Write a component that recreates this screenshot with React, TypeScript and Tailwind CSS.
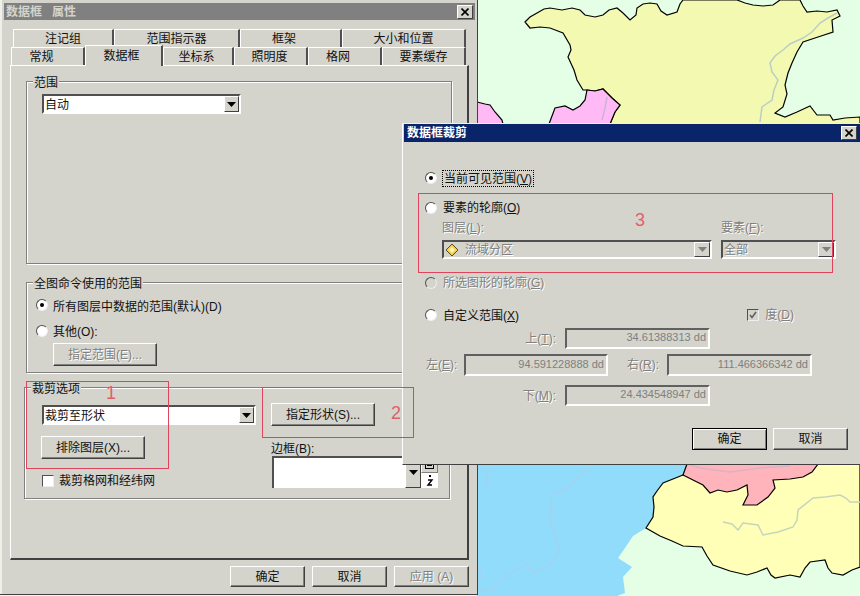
const ui = "#d4d4cc";

function MapBackdrop() {
  return (
    <svg className="absolute inset-0" width="860" height="596" viewBox="0 0 860 596">
      <rect width="860" height="596" fill="#e5ffe6" />
      <path
        d="M525 22 L530 17 L537 13 L544 9 L550 8 L562 10 L572 8 L580 10 L585 15 L595 17 L603 15 L609 10 L617 8 L623 13 L630 20 L636 15 L637 8 L643 4 L650 3 L657 4 L661 11 L667 15 L677 12 L680 4 L683 0 L737 0 L745 3 L753 5 L763 6 L773 5 L780 0 L800 0 L803 6 L807 12 L817 11 L827 12 L837 10 L840 16 L832 20 L833 32 L818 37 L803 42 L797 52 L792 63 L788 73 L785 85 L787 94 L783 107 L775 113 L785 117 L797 112 L810 106 L817 115 L830 115 L833 120 L845 118 L860 117 L860 124 L610 124 L615 112 L620 105 L612 98 L603 89 L595 91 L587 90 L583 90 L577 80 L574 70 L568 57 L571 50 L570 45 L563 33 L550 28 L540 27 L530 28 Z"
        fill="#f4f9b2"
        stroke="#000"
        strokeWidth="1.2"
      />
      <path
        d="M587 90 L595 91 L603 89 L612 98 L620 105 L615 112 L610 124 L549 124 L552 116 L555 108 L565 106 L573 110 L580 106 L585 100 Z"
        fill="#ffb9f5"
        stroke="#000"
        strokeWidth="1.2"
      />
      <path d="M477 102 L485 104 L490 105 L495 112 L502 120 L503 124 L477 124 Z" fill="#ffb9f5" stroke="#000" strokeWidth="1.2" />
      <polyline
        points="837,13 828,18 820,23 812,32 803,38 790,44 783,50 775,56 770,63 772,72 778,80 774,90 772,100 762,107 760,122"
        fill="none"
        stroke="#b9cfc4"
        strokeWidth="1.5"
      />
      <polyline points="607,97 605,108 602,120" fill="none" stroke="#c6b6d8" strokeWidth="1.5" />

      <path
        d="M477 464 L687 464 L683 475 L672 480 L663 483 L657 491 L653 497 L654 507 L653 517 L646 528 L633 536 L625 548 L618 558 L632 567 L623 577 L625 593 L617 596 L477 596 Z"
        fill="#90dcfa"
      />
      <path
        d="M683 475 L663 483 L657 491 L653 497 L654 507 L653 517 L646 528 L660 536 L672 541 L683 546 L702 547 L707 556 L713 565 L730 571 L747 575 L757 572 L767 568 L771 575 L775 578 L790 575 L800 577 L805 568 L810 562 L825 560 L828 568 L832 573 L843 575 L852 570 L860 567 L860 464 L690 464 Z"
        fill="#ffffb8"
        stroke="#000"
        strokeWidth="1.2"
      />
      <path
        d="M687 464 L683 475 L693 480 L703 485 L710 493 L718 490 L727 492 L737 490 L747 485 L748 495 L743 505 L757 505 L768 497 L775 488 L773 480 L790 479 L803 477 L812 472 L818 464 Z"
        fill="#ffb3bb"
        stroke="#000"
        strokeWidth="1.2"
      />
      <polyline
        points="723,522 732,524 738,530 743,523 758,525 763,535 778,532 793,527 797,520 798,510 813,498 825,497 840,495 846,498 850,502 860,502"
        fill="none"
        stroke="#c5d6bd"
        strokeWidth="1.5"
      />
      <polyline
        points="590,467 577,478 565,490 552,493 550,517 555,535 560,550 550,565 533,573 527,563 512,573 497,583 493,590 478,590"
        fill="none"
        stroke="#a4d2f0"
        strokeWidth="1.5"
      />
      <polyline points="488,468 485,490" fill="none" stroke="#a4d2f0" strokeWidth="1.5" />
      <polyline points="478,565 481,575 478,585" fill="none" stroke="#a4d2f0" strokeWidth="1.5" />
      <polyline points="687,464 700,468 730,472 760,468 790,466" fill="none" stroke="#d8b4c4" strokeWidth="1.5" />
    </svg>
  );
}

function CloseButton() {
  return (
    <span className="flex h-[14px] w-[16px] items-center justify-center border border-t-white border-l-white border-r-[#404040] border-b-[#404040] bg-[#d4d4cc]">
      <svg width="8" height="8" viewBox="0 0 8 8">
        <path d="M0.5 0.5 L7.5 7.5 M7.5 0.5 L0.5 7.5" stroke="#000" strokeWidth="1.6" />
      </svg>
    </span>
  );
}

function Tab({ label, w, active }: { label: string; w: string; active?: boolean }) {
  return (
    <div
      className={`flex shrink-0 items-center justify-center border-t border-l border-t-white border-l-white border-r-2 border-r-[#505050] bg-[#d4d4cc] ${w} ${
        active ? "relative z-10 -mb-px h-[21px] border-r-[#404040]" : "h-[18px]"
      }`}
    >
      {label}
    </div>
  );
}

function Group({ label, className, children }: { label: string; className: string; children: React.ReactNode }) {
  return (
    <div className={`relative border border-[#808080] shadow-[inset_1px_1px_0_#fff,1px_1px_0_#fff] ${className}`}>
      <span className="absolute -top-[7px] left-[6px] bg-[#d4d4cc] px-px">{label}</span>
      {children}
    </div>
  );
}

function Button({
  label,
  className,
  disabled,
  isDefault,
}: {
  label: string;
  className: string;
  disabled?: boolean;
  isDefault?: boolean;
}) {
  return (
    <div
      className={`flex shrink-0 items-center justify-center border bg-[#d4d4cc] ${
        isDefault
          ? "border-black shadow-[inset_1px_1px_0_#fff,inset_-1px_-1px_0_#808080]"
          : "border-t-white border-l-white border-r-[#404040] border-b-[#404040] shadow-[inset_-1px_-1px_0_#808080]"
      } ${disabled ? "text-[#808080] [text-shadow:1px_1px_0_#fff]" : ""} ${className}`}
    >
      {label}
    </div>
  );
}

function Arrow({ disabled, className }: { disabled?: boolean; className: string }) {
  return (
    <span
      className={`flex shrink-0 items-center justify-center border border-t-white border-l-white border-r-[#404040] border-b-[#404040] bg-[#d4d4cc] ${className}`}
    >
      <svg width="9" height="5" viewBox="0 0 9 5">
        <path d="M0 0 H9 L4.5 5 Z" fill={disabled ? "#808080" : "#000"} />
      </svg>
    </span>
  );
}

function Select({ value, className }: { value: string; className: string }) {
  return (
    <div className={`flex items-center border-2 border-t-[#505050] border-l-[#505050] border-r-white border-b-white bg-white pl-px ${className}`}>
      <span className="flex-1 pt-px">{value}</span>
      <Arrow className="h-full w-[15px]" />
    </div>
  );
}

function Radio({ checked, disabled }: { checked?: boolean; disabled?: boolean }) {
  return (
    <span
      className={`flex h-3 w-3 shrink-0 items-center justify-center rounded-full border border-t-[#505050] border-l-[#505050] border-r-[#eeeeee] border-b-[#eeeeee] ${
        disabled ? "bg-[#d4d4cc]" : "bg-white"
      }`}
    >
      {checked ? <span className="h-1 w-1 rounded-full bg-black" /> : null}
    </span>
  );
}

function Field({ value, className }: { value: string; className: string }) {
  return (
    <div
      className={`flex items-center justify-end border-2 border-t-[#606060] border-l-[#606060] border-r-white border-b-white pr-[2px] pb-[3px] text-[11px] text-[#808080] ${className}`}
    >
      {value}
    </div>
  );
}

const dim = "text-[#808080] [text-shadow:1px_1px_0_#fff]";

function PropertiesWindow() {
  return (
    <div className="absolute top-0 left-0 h-[595px] w-[478px] border-r border-b border-r-[#404040] border-b-[#404040] bg-[#d4d4cc] pt-[3px] pl-[4px] shadow-[inset_2px_0_0_#eef0ea]">
      <div className="flex h-[17px] w-[471px] items-center justify-between bg-[#808080] pr-[2px] pl-[2px] font-bold text-[#d4d4cc]">
        <span>数据框&nbsp;&nbsp;&nbsp;属性</span>
        <CloseButton />
      </div>

      <div className="mt-[9px] ml-[9px] flex h-[18px] items-end">
        <Tab label="注记组" w="w-[101px]" />
        <Tab label="范围指示器" w="w-[126px]" />
        <Tab label="框架" w="w-[102px] pr-[13px]" />
        <Tab label="大小和位置" w="w-[124px]" />
      </div>
      <div className="ml-[7px] flex h-[18px] items-end">
        <Tab label="常规" w="w-[74px] pr-[12px]" />
        <Tab label="数据框" w="w-[78px] pr-[4px]" active />
        <Tab label="坐标系" w="w-[71px] pr-[3px]" />
        <Tab label="照明度" w="w-[74px] pr-[2px]" />
        <Tab label="格网" w="w-[74px] pr-[13px]" />
        <Tab label="要素缓存" w="w-[84px]" />
      </div>

      <div className="ml-[6px] h-[495px] w-[459px] border-t border-l border-t-white border-l-white border-r-2 border-b-2 border-r-[#404040] border-b-[#404040] pt-[15px] pl-[15px]">
        <Group label="范围" className="h-[183px] w-[426px] pt-[12px] pl-[15px]">
          <Select value="自动" className="h-[20px] w-[199px]" />
        </Group>

        <Group label="全图命令使用的范围" className="mt-[18px] h-[91px] w-[426px] pt-[14px] pl-[9px]">
          <div className="flex h-4 items-center gap-[5px]">
            <Radio checked />
            <span className="pt-[3px]">所有图层中数据的范围(默认)(D)</span>
          </div>
          <div className="mt-[10px] flex h-4 items-center gap-[5px]">
            <Radio />
            <span className="pt-[2px]">其他(O):</span>
          </div>
          <Button label="指定范围(E)..." className="mt-[4px] ml-[17px] h-[23px] w-[104px]" disabled />
        </Group>

        <Group label="裁剪选项" className="mt-[14px] -ml-[2px] flex h-[112px] w-[426px]">
          <div className="w-[246px] shrink-0 pt-[17px] pl-[16px]">
            <Select value="裁剪至形状" className="ml-px h-[20px] w-[214px]" />
            <Button label="排除图层(X)..." className="mt-[11px] h-[23px] w-[104px]" />
            <div className="mt-[14px] ml-px flex h-4 items-center gap-[5px]">
              <span className="h-3 w-3 border border-t-[#505050] border-l-[#505050] border-r-[#eeeeee] border-b-[#eeeeee] bg-white" />
              <span>裁剪格网和经纬网</span>
            </div>
          </div>
          <div className="pt-[15px]">
            <Button label="指定形状(S)..." className="h-[23px] w-[104px]" />
            <div className="mt-[14px] h-4 pt-px">边框(B):</div>
            <div className="ml-px flex h-[32px] items-end">
              <div className="h-[32px] w-[133px] border-t-2 border-l-2 border-t-[#505050] border-l-[#505050] bg-white" />
              <Arrow className="h-[32px] w-[16px]" />
              <div className="flex h-[32px] w-[17px] flex-col">
                <span className="flex h-[17px] items-center justify-center border border-t-white border-l-white border-r-[#808080] border-b-[#808080]">
                  <svg width="9" height="9" viewBox="0 0 9 9">
                    <rect x="0.5" y="0.5" width="8" height="8" fill="none" stroke="#000" />
                    <path d="M2 3.5 H7 M2 5.5 H7" stroke="#000" />
                  </svg>
                </span>
                <span className="flex h-[15px] items-center justify-center bg-white">
                  <svg width="8" height="11" viewBox="0 0 8 11">
                    <rect x="3" y="0" width="2" height="2" fill="#000" />
                    <path d="M2 5 H6 L2 10 H6" fill="none" stroke="#000" strokeWidth="1.4" />
                  </svg>
                </span>
              </div>
            </div>
          </div>
        </Group>
      </div>

      <div className="mt-[6px] flex gap-[7px] pl-[226px]">
        <Button label="确定" className="h-[21px] w-[75px]" />
        <Button label="取消" className="h-[21px] w-[75px]" />
        <Button label="应用 (A)" className="h-[21px] w-[75px]" disabled />
      </div>
    </div>
  );
}

function ClipWindow() {
  return (
    <div className="absolute top-[123px] left-[402px] h-[342px] w-[458px] border-t border-l border-t-[#eef0ea] border-l-white border-b border-b-[#404040] bg-[#d4d4cc] pl-px">
      <div className="flex h-[18px] items-center justify-between bg-[#0a246a] pr-[3px] pl-[3px] font-bold text-white">
        <span>数据框裁剪</span>
        <CloseButton />
      </div>

      <div className="pl-[21px]">
        <div className="mt-[28px] flex h-4 items-center gap-[5px]">
          <Radio checked />
          <span className="border border-dotted border-black px-px pt-px leading-[14px]">当前可见范围(<u>V</u>)</span>
        </div>

        <div className="mt-[14px] flex h-4 items-center gap-[6px]">
          <Radio />
          <span>要素的轮廓(<u>O</u>)</span>
        </div>

        <div className={`mt-[4px] ml-[17px] flex h-4 ${dim}`}>
          <span className="w-[279px]">图层(<u>L</u>):</span>
          <span>要素(<u>F</u>):</span>
        </div>
        <div className="mt-[4px] ml-[17px] flex">
          <div className={`flex h-[19px] w-[270px] items-center border-2 border-t-[#505050] border-l-[#505050] border-r-white border-b-white ${dim}`}>
            <svg className="mr-[6px] ml-px shrink-0" width="14" height="14" viewBox="0 0 14 14">
              <path d="M7 1 L13 7 L7 13 L1 7 Z" fill="#f4cf4e" stroke="#5b4a1c" strokeWidth="1" />
              <path d="M7 4 L10 7 L7 10 L4 7 Z" fill="#fdf3b0" />
            </svg>
            <span className="flex-1">流域分区</span>
            <Arrow disabled className="h-full w-[16px]" />
          </div>
          <div className={`ml-[9px] flex h-[19px] w-[115px] items-center border-2 border-t-[#505050] border-l-[#505050] border-r-white border-b-white pl-px ${dim}`}>
            <span className="flex-1">全部</span>
            <Arrow disabled className="h-full w-[16px]" />
          </div>
        </div>

        <div className={`mt-[16px] flex h-4 items-center gap-[6px] ${dim}`}>
          <Radio disabled />
          <span>所选图形的轮廓(<u>G</u>)</span>
        </div>

        <div className="mt-[16px] flex h-4 w-[369px] items-center justify-between">
          <div className="flex items-center gap-[6px]">
            <Radio />
            <span className="pt-[2px]">自定义范围(<u>X</u>)</span>
          </div>
          <div className={`flex items-center gap-[6px] ${dim}`}>
            <span className="flex h-3 w-3 items-center justify-center border border-t-[#505050] border-l-[#505050] border-r-[#eeeeee] border-b-[#eeeeee]">
              <svg width="8" height="8" viewBox="0 0 8 8">
                <path d="M1 4 L3 6.5 L7 1" fill="none" stroke="#606060" strokeWidth="1.6" />
              </svg>
            </span>
            <span>度(<u>D</u>)</span>
          </div>
        </div>

        <div className="mt-[5px] flex h-[21px] items-center">
          <span className={`w-[131px] shrink-0 text-right whitespace-nowrap ${dim}`}>上(<u>T</u>):</span>
          <Field value="34.61388313 dd" className="ml-[9px] h-[21px] w-[145px]" />
        </div>
        <div className="mt-[5px] flex h-[22px] items-center">
          <span className={`ml-px w-[31px] shrink-0 whitespace-nowrap ${dim}`}>左(<u>E</u>):</span>
          <Field value="94.591228888 dd" className="ml-[7px] h-[22px] w-[144px]" />
          <span className={`ml-[19px] w-[31px] shrink-0 whitespace-nowrap ${dim}`}>右(<u>R</u>):</span>
          <Field value="111.466366342 dd" className="ml-[9px] h-[22px] w-[145px]" />
        </div>
        <div className="mt-[9px] flex h-[21px] items-center">
          <span className={`w-[131px] shrink-0 text-right whitespace-nowrap ${dim}`}>下(<u>M</u>):</span>
          <Field value="24.434548947 dd" className="ml-[9px] h-[21px] w-[145px]" />
        </div>

        <div className="mt-[22px] flex justify-end gap-[6px] pr-[12px]">
          <Button label="确定" className="h-[22px] w-[75px]" isDefault />
          <Button label="取消" className="h-[22px] w-[75px]" />
        </div>
      </div>
    </div>
  );
}

export default function App() {
  return (
    <div
      className="relative h-[596px] w-[860px] overflow-hidden font-['Liberation_Sans','Noto_Sans_CJK_SC',sans-serif] text-xs leading-4 text-[#111]"
      style={{ backgroundColor: ui }}
    >
      <MapBackdrop />
      <PropertiesWindow />
      <ClipWindow />

      {/* red notes drawn over the screenshot */}
      <div className="absolute top-[381px] left-[26px] h-[88px] w-[143px] border border-[#e0445c]" />
      <div className="absolute top-[387px] left-[262px] h-[51px] w-[152px] border border-[#e0445c]" />
      <div className="absolute top-[193px] left-[418px] h-[80px] w-[415px] border border-[#e0445c]" />
      <span className="absolute top-[384px] left-[106px] text-lg leading-[18px] text-[#e0606a]">1</span>
      <span className="absolute top-[404px] left-[391px] text-lg leading-[18px] text-[#e0606a]">2</span>
      <span className="absolute top-[211px] left-[635px] text-lg leading-[18px] text-[#e0606a]">3</span>
    </div>
  );
}
